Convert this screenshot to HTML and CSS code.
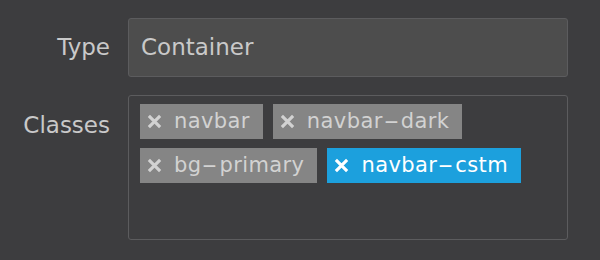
FILE: index.html
```html
<!DOCTYPE html>
<html lang="en">

<head>
  <meta charset="UTF-8">
  <title>Element egenskaber</title>
  <link rel="stylesheet" href="styles.css">
</head>

<body>
  <section class="panel">
    <label class="label">Type</label>
    <div class="felt">Container</div>

    <label class="label label-top">Classes</label>
    <div class="felt tags">
      <span class="tag"><svg class="fjern" viewBox="0 0 12 12"><path d="M1.5 1.5L10.5 10.5M10.5 1.5L1.5 10.5" /></svg>navbar</span>
      <span class="tag"><svg class="fjern" viewBox="0 0 12 12"><path d="M1.5 1.5L10.5 10.5M10.5 1.5L1.5 10.5" /></svg>navbar<span class="streg">-</span>dark</span>
      <span class="tag"><svg class="fjern" viewBox="0 0 12 12"><path d="M1.5 1.5L10.5 10.5M10.5 1.5L1.5 10.5" /></svg>bg<span class="streg">-</span>primary</span>
      <span class="tag valgt"><svg class="fjern" viewBox="0 0 12 12"><path d="M1.5 1.5L10.5 10.5M10.5 1.5L1.5 10.5" /></svg>navbar<span class="streg">-</span>cstm</span>
    </div>
  </section>
</body>

</html>
```

FILE: styles.css
```css
* {
  box-sizing: border-box;
}

body {
  margin: 0;
  background: #3d3d3f;
  font-family: "DejaVu Sans", sans-serif;
  font-size: 23px;
  line-height: 27px;
  color: #c9c9c9;
}

.panel {
  display: grid;
  grid-template-columns: 110px 440px;
  column-gap: 18px;
  row-gap: 18px;
  padding-top: 18px;
}

.label {
  text-align: right;
  align-self: center;
}

.label-top {
  align-self: start;
  padding-top: 17px;
}

.felt {
  height: 59px;
  background: #4d4d4d;
  border: 1px solid #5c5c5e;
  border-radius: 3px;
  padding: 0 12px;
  display: flex;
  align-items: center;
}

.tags {
  height: 145px;
  background: #3d3d3f;
  padding: 8px 11px;
  display: flex;
  flex-wrap: wrap;
  align-items: flex-start;
  align-content: flex-start;
  gap: 9px 10px;
}

.tag {
  height: 35px;
  background: #858585;
  color: #d2d2d2;
  font-size: 21px;
  letter-spacing: 0.4px;
  display: flex;
  align-items: center;
  padding: 0 13px 0 7px;
}

.streg {
  display: inline-block;
  margin: 0 5px;
  transform: scaleX(2.1);
}

.fjern {
  width: 15px;
  height: 15px;
  margin-right: 12px;
  stroke: currentColor;
  stroke-width: 2.5;
}

.valgt {
  background: #1ca0dd;
  color: #fff;
}
```
